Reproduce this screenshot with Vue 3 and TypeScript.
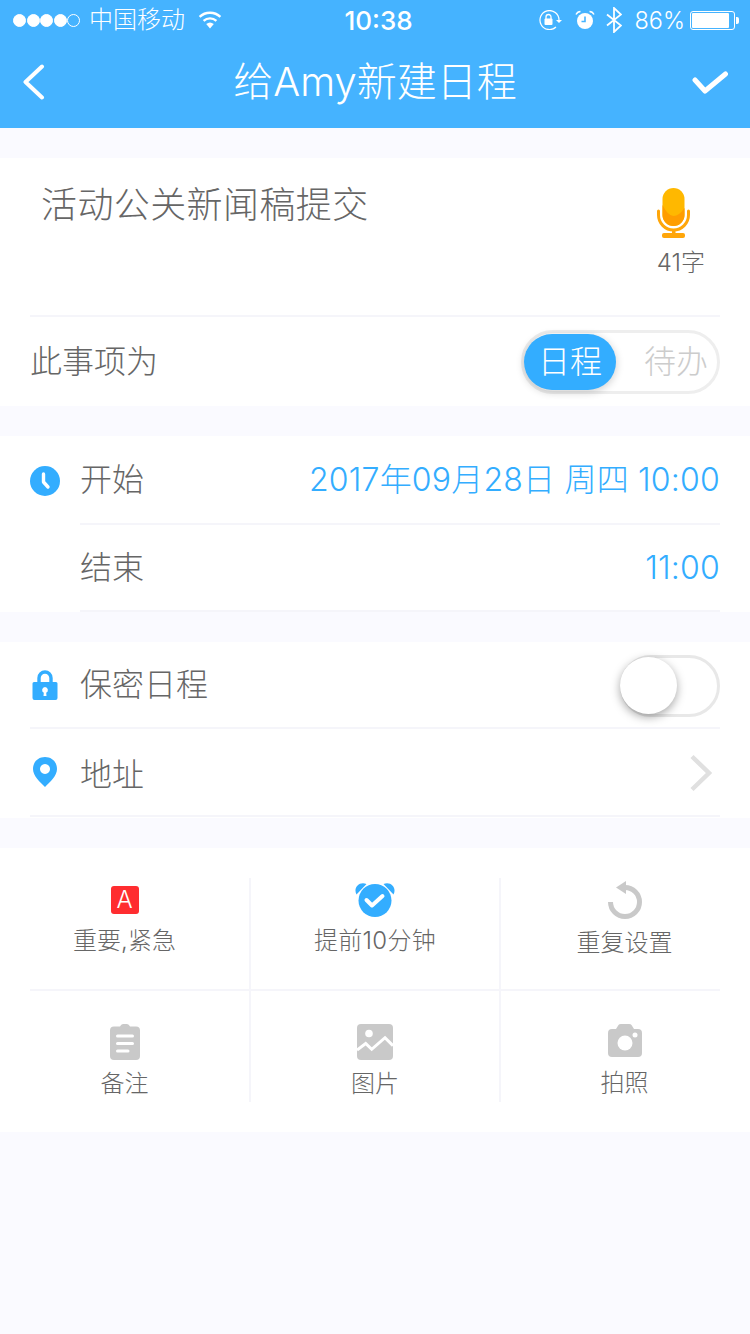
<script setup lang="ts">
const dots: boolean[] = [true, true, true, true, false]
</script>

<template>
  <div class="page">
    <header class="top">
      <div class="status">
        <div class="st-left">
          <span class="dots"><i v-for="(d, i) in dots" :key="i" :class="{ on: d }"></i></span>
          <span class="carrier">中国移动</span>
          <svg class="wifi" width="24" height="18" viewBox="0 0 24 18">
            <path d="M12 17.5 L8.2 13 A6 6 0 0 1 15.8 13 Z" fill="#fff" />
            <path d="M5.6 9.8 A9.6 9.6 0 0 1 18.4 9.8" fill="none" stroke="#fff" stroke-width="2.4" />
            <path d="M1.6 5.8 A15.2 15.2 0 0 1 22.4 5.8" fill="none" stroke="#fff" stroke-width="2.4" />
          </svg>
        </div>
        <div class="time">10:38</div>
        <div class="st-right">
          <svg width="24" height="20" viewBox="0 0 24 20">
            <path d="M21 10 A9.5 9.5 0 1 0 18 17" fill="none" stroke="#fff" stroke-width="1.2" />
            <path d="M18 10 h6 l-3 3z" fill="#fff" />
            <rect x="6.5" y="8.5" width="8" height="6.5" rx="1" fill="#fff" />
            <path d="M8 9 V7 a2.5 2.5 0 0 1 5 0 V9" fill="none" stroke="#fff" stroke-width="1.3" />
          </svg>
          <svg class="st-alarm" width="20" height="20" viewBox="0 0 20 20">
            <circle cx="10" cy="11" r="8" fill="#fff" />
            <path d="M10 6.5 V11.5 H6.5" fill="none" stroke="#45b3ff" stroke-width="1.6" />
            <path d="M1 4.5 Q2.5 1.5 5.5 1.5 M19 4.5 Q17.5 1.5 14.5 1.5" fill="none" stroke="#fff" stroke-width="1.4" />
          </svg>
          <svg class="st-bt" width="16" height="26" viewBox="0 0 16 26">
            <path d="M1 7.5 L15 18.5 L8 25 V1 L15 7.5 L1 18.5" fill="none" stroke="#fff" stroke-width="1.8" />
          </svg>
          <span class="pct">86%</span>
          <span class="battery"><b></b></span>
        </div>
      </div>
      <nav class="nav">
        <svg width="24" height="36" viewBox="0 0 24 36">
          <path d="M20 2.5 L3.5 18 L20 33.5" fill="none" stroke="#fff" stroke-width="4" stroke-linecap="round" stroke-linejoin="round" />
        </svg>
        <h1>给Amy新建日程</h1>
        <svg class="confirm" width="36" height="28" viewBox="0 0 36 28">
          <path d="M3 12 L13 23 L33.5 6" fill="none" stroke="#fff" stroke-width="5" stroke-linecap="round" stroke-linejoin="round" />
        </svg>
      </nav>
    </header>

    <section class="card first">
      <div class="subject">
        <div class="subject-text">活动公关新闻稿提交</div>
        <div class="voice">
          <svg width="34" height="52" viewBox="0 0 34 52">
            <rect x="5.5" y="0" width="22" height="38" rx="11" fill="#ffb800" />
            <path d="M5.5 17 Q11 28 16.5 28 Q22 28 27.5 20 V27 A11 11 0 0 1 5.5 27 Z" fill="#ff9d00" />
            <path d="M1.5 23 V27 A15 15 0 0 0 31.5 27 V23" fill="none" stroke="#ffa60a" stroke-width="3" stroke-linecap="round" />
            <rect x="15" y="42" width="3.5" height="6" fill="#ffa60a" />
            <rect x="5" y="45" width="23" height="5" rx="2" fill="#ffa60a" />
          </svg>
          <span class="count">41字</span>
        </div>
      </div>
      <div class="row type-row">
        <span class="label">此事项为</span>
        <div class="segment">
          <span class="seg on">日程</span>
          <span class="seg">待办</span>
        </div>
      </div>
    </section>

    <section class="card">
      <div class="row time-row upper-time">
        <svg class="row-icon" width="30" height="30" viewBox="0 0 30 30">
          <circle cx="15" cy="15" r="15" fill="#33adff" />
          <path d="M13.5 8 V16 L18 21" fill="none" stroke="#fff" stroke-width="3.4" stroke-linecap="round" stroke-linejoin="round" />
        </svg>
        <div class="row-body">
          <span class="label">开始</span>
          <span class="value">2017年09月28日 周四 10:00</span>
        </div>
      </div>
      <div class="row time-row">
        <span class="row-icon"></span>
        <div class="row-body">
          <span class="label">结束</span>
          <span class="value">11:00</span>
        </div>
      </div>
    </section>

    <section class="card options">
      <div class="row opt-row upper-opt">
        <svg class="row-icon" width="30" height="30" viewBox="-2 0 30 30">
          <path d="M7 14 V8 a6 6 0 0 1 12 0 V14" fill="none" stroke="#33adff" stroke-width="3.4" />
          <path fill-rule="evenodd" d="M2 12 H24 a1.5 1.5 0 0 1 1.5 1.5 V28 a2 2 0 0 1 -2 2 H2.5 a2 2 0 0 1 -2 -2 V13.5 A1.5 1.5 0 0 1 2 12 Z M13 17 a3 3 0 0 0 -1.2 5.7 L11.5 26 H14.5 L14.2 22.7 A3 3 0 0 0 13 17 Z" fill="#33adff" />
        </svg>
        <div class="row-body full">
          <span class="label">保密日程</span>
          <div class="switch"><span class="knob"></span></div>
        </div>
      </div>
      <div class="row opt-row lower-opt">
        <svg class="row-icon" width="30" height="30" viewBox="0 0 30 30">
          <path fill-rule="evenodd" d="M15 0 C8 0 3 5 3 12 C3 19 10 25 15 30 C20 25 27 19 27 12 C27 5 22 0 15 0 Z M15 7 a5 5 0 1 0 0.01 0 Z" fill="#33adff" />
        </svg>
        <div class="row-body full">
          <span class="label">地址</span>
          <svg class="chev" width="24" height="38" viewBox="0 0 24 38">
            <path d="M3 2.5 L20 19 L3 35.5" fill="none" stroke="#e0e0e0" stroke-width="4.5" />
          </svg>
        </div>
      </div>
    </section>

    <section class="card tools">
      <div class="tool-row">
        <div class="tool">
          <span class="tag">A</span>
          <span class="tool-label t1">重要,紧急</span>
        </div>
        <div class="tool">
          <svg class="i-alarm" width="40" height="36" viewBox="0 0 40 36">
            <circle cx="20" cy="18.5" r="16.5" fill="#33adff" />
            <path d="M1.5 12.5 C-2 6 4 -1 11.5 2 Z M38.5 12.5 C42 6 36 -1 28.5 2 Z" fill="#33adff" />
            <path d="M11.5 18 L17 23.5 L27.5 14" fill="none" stroke="#fff" stroke-width="4" stroke-linecap="round" stroke-linejoin="round" />
          </svg>
          <span class="tool-label t2">提前10分钟</span>
        </div>
        <div class="tool">
          <svg class="i-repeat" width="34" height="38" viewBox="0 0 34 38">
            <path d="M17 6.5 A14.5 14.5 0 1 1 2.5 21" fill="none" stroke="#c9c9c9" stroke-width="5" />
            <path d="M8 6.5 L18 0 V13 Z" fill="#c9c9c9" />
          </svg>
          <span class="tool-label t3">重复设置</span>
        </div>
      </div>
      <div class="tool-divider"></div>
      <div class="tool-row">
        <div class="tool">
          <svg class="i-note" width="30" height="36" viewBox="0 0 30 36">
            <path d="M4 2.5 H10 Q11 0 13 0 H17 Q19 0 20 2.5 H26 Q30 2.5 30 6.5 V32 Q30 36 26 36 H4 Q0 36 0 32 V6.5 Q0 2.5 4 2.5 Z" fill="#c9c9c9" />
            <path d="M7.5 12 H22.5 M7.5 19.5 H22.5 M7.5 27 H18" stroke="#fff" stroke-width="3" stroke-linecap="round" />
          </svg>
          <span class="tool-label t4">备注</span>
        </div>
        <div class="tool">
          <svg class="i-pic" width="36" height="36" viewBox="0 0 36 36">
            <rect width="36" height="36" rx="4" fill="#c9c9c9" />
            <circle cx="12" cy="9.5" r="3.8" fill="#fff" />
            <path d="M0 26 L8.7 19.5 L14.7 25.3 L28 13.7 L36 21.7" fill="none" stroke="#fff" stroke-width="3" />
          </svg>
          <span class="tool-label t4">图片</span>
        </div>
        <div class="tool">
          <svg class="i-cam" width="34" height="33" viewBox="0 0 34 33">
            <path d="M4 5 H8 L10.5 1 Q11 0 13 0 H21 Q23 0 23.5 1 L26 5 H30 Q34 5 34 9 V29 Q34 33 30 33 H4 Q0 33 0 29 V9 Q0 5 4 5 Z" fill="#c9c9c9" />
            <circle cx="17" cy="19" r="7.5" fill="#fff" />
            <circle cx="27" cy="11" r="2.5" fill="#fff" />
          </svg>
          <span class="tool-label t5">拍照</span>
        </div>
      </div>
    </section>
  </div>
</template>

<style>
html, body { margin: 0; background: #fafaff; }
</style>

<style scoped>
.page {
  width: 750px;
  min-height: 1334px;
  background: #fafaff;
  font-family: "Inter", "Noto Sans CJK SC", sans-serif;
  font-weight: 300;
  color: #666;
  overflow: hidden;
}
.top { background: #45b3ff; color: #fff; height: 128px; }
.status {
  height: 40px;
  display: grid;
  grid-template-columns: 1fr auto 1fr;
  align-items: center;
  padding: 0 15px 0 13px;
  font-size: 24px;
}
.st-left, .st-right { display: flex; align-items: center; }
.st-right { justify-content: flex-end; }
.dots { display: flex; gap: 0.5px; margin-right: 9px; }
.dots i {
  width: 11px; height: 11px; border-radius: 50%;
  border: 1px solid #fff;
}
.dots i.on { background: #fff; }
.carrier { line-height: 40px; }
.wifi { margin-left: 13px; }
.time { font: 500 26px "Inter", sans-serif; padding-left: 9px; }
.st-alarm { margin-left: 13px; }
.st-bt { margin-left: 11px; }
.pct { font-size: 23.5px; margin-left: 12px; }
.battery {
  width: 41px; height: 15px; margin-left: 5px; padding: 1px;
  border: 1px solid #fff; border-radius: 3px; display: block; position: relative;
}
.battery b { display: block; width: 37px; height: 15px; background: #fff; border-radius: 1px; }
.battery::after {
  content: ""; position: absolute; right: -5px; top: 5px;
  width: 3px; height: 7px; background: #fff; border-radius: 0 2px 2px 0;
}
.nav {
  height: 88px; display: grid; grid-template-columns: 1fr auto 1fr; align-items: center;
  padding: 0 22px 4px 22px;
  box-sizing: border-box;
}
.nav h1 { margin: 0; font-size: 40px; font-weight: 300; line-height: 48px; }
.confirm { justify-self: end; }

.card { background: #fff; margin-top: 30px; }
.row { display: flex; align-items: center; }
.subject {
  height: 157px; display: flex; justify-content: space-between;
  padding: 21px 45px 0 41px; box-sizing: border-box;
}
.subject-text { font-size: 36px; letter-spacing: 0.4px; line-height: 52px; }
.voice { display: flex; flex-direction: column; align-items: flex-start; padding-top: 9px; }
.count { font-size: 24px; margin-top: 6px; line-height: 34px; }
.type-row {
  height: 91px; margin: 0 30px 0 30px; border-top: 2px solid #f5f5fa;
  justify-content: space-between; box-sizing: border-box;
}
.label { font-size: 32px; margin-top: 1px; line-height: 44px; }
.segment {
  width: 199px; height: 64px; box-sizing: border-box;
  border: 3px solid #eee; border-radius: 32px;
  display: flex; align-items: center;
}
.seg { flex: none; width: 64px; height: 56px; text-align: center; font-size: 32px; line-height: 56px; color: #ccc; border-radius: 28px; margin-left: 28px; }
.seg.on { width: 92px; background: #33adff; color: #fff; margin-left: 0; box-shadow: 0 2px 8px rgba(0,0,0,.2); }

.row-icon { width: 30px; height: 30px; margin-right: 20px; flex: none; }
.time-row { height: 87px; padding: 0 30px; }
.upper-time { height: 89px; }
.row-body {
  flex: 1; height: 100%; display: flex; align-items: center; justify-content: space-between;
  border-bottom: 2px solid #f5f5fa; box-sizing: border-box;
}
.value { color: #33adff; font-size: 32px; margin-top: 1px; line-height: 44px; letter-spacing: 0.2px; }
.options { padding-bottom: 1px; }
.opt-row { height: 88px; margin: 0 30px; border-bottom: 2px solid #f5f5fa; box-sizing: border-box; }
.upper-opt { height: 87px; }
.lower-opt .label { margin-top: 5px; }
.row-body.full { border-bottom: 0; padding-right: 5px; }
.chev { margin: 2px 2px 0 0; }
.switch {
  width: 100px; height: 62px; box-sizing: border-box; position: relative; margin-top: 2px;
  border: 3px solid #e8e8e8; border-radius: 31px; margin-right: -5px;
}
.knob {
  position: absolute; left: -3px; top: -1px; width: 57px; height: 57px; border-radius: 50%;
  background: #fff; box-shadow: 0 3px 10px rgba(0,0,0,.35);
}
.tools { padding: 30px 0; }
.tool-row { display: flex; height: 111px; }
.tool {
  width: 250px; display: flex; flex-direction: column; align-items: center;
  border-right: 2px solid #f5f5fa; box-sizing: border-box;
}
.tool:first-child { width: 251px; }
.tool:last-child { width: 249px; border-right: 0; padding-right: 2px; }
.tool-divider { height: 2px; margin: 0 30px; background: #f5f5fa; }
.tag {
  width: 28px; height: 28px; margin-top: 8px; background: #ff2d30; color: #fff;
  border-radius: 3px; text-align: center; font-size: 24px; line-height: 28px;
}
.tool-label { font-size: 24px; line-height: 34px; color: #666; }
.t1 { margin-top: 10px; }
.i-alarm { margin-top: 4px; }
.t2 { margin-top: 6px; letter-spacing: 0.3px; }
.i-repeat { margin-top: 3px; }
.t3 { margin-top: 7px; }
.i-note, .i-pic { margin-top: 33px; }
.t4 { margin-top: 7px; }
.i-cam { margin-top: 33px; }
.t5 { margin-top: 9px; }
</style>
